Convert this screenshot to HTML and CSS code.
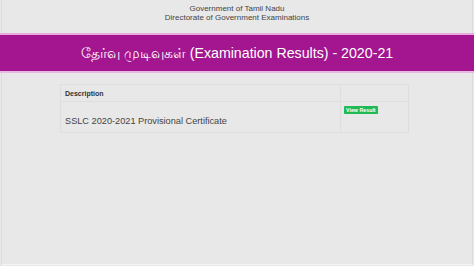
FILE: index.html
```html
<!DOCTYPE html>
<html>
<head>
<meta charset="utf-8">
<link rel="stylesheet" href="styles.css">
</head>
<body>
<div class="page">
  <header class="top">
    <div>Government of Tamil Nadu</div>
    <div>Directorate of Government Examinations</div>
  </header>
  <div class="banner">தேர்வு முடிவுகள் (Examination Results) - 2020-21</div>
  <main class="content">
    <table class="results">
      <thead>
        <tr><th class="desc">Description</th><th class="act"></th></tr>
      </thead>
      <tbody>
        <tr><td class="desc">SSLC 2020-2021 Provisional Certificate</td><td class="act"><span class="btn">View Result</span></td></tr>
      </tbody>
    </table>
  </main>
</div>
</body>
</html>
```

FILE: styles.css
```css
html, body {
  margin: 0;
  padding: 0;
  background: #e8e8e8;
}
body {
  font-family: "Liberation Sans", Arial, sans-serif;
  color: #333;
  width: 474px;
  height: 266px;
  overflow: hidden;
}
.page {
  height: 264px;
  margin: 0 1px;
  border-left: 1px solid #dcdcdc;
  border-right: 1px solid #dcdcdc;
  border-bottom: 1px solid #f4f4f4;
}
.top {
  text-align: center;
  font-size: 8px;
  line-height: 8.5px;
  color: #444;
  padding-top: 5px;
  height: 33px;
  box-sizing: border-box;
}
.banner {
  margin: 0 -2px;
  background: #a3168f;
  border-top: 2px solid #e8a9dd;
  border-bottom: 2px solid #e8b9e0;
  color: #fff;
  text-align: center;
  font-size: 14.2px;
  height: 36px;
  line-height: 36px;
}
.content {
  padding: 11px 0 0 58px;
}
.results {
  border-collapse: collapse;
  width: 349px;
}
.results th, .results td {
  border: 1px solid #dedede;
  text-align: left;
  vertical-align: top;
}
.results th {
  font-size: 7px;
  font-weight: bold;
  color: #333;
  height: 17px;
  padding: 5px 4px 0;
  box-sizing: border-box;
}
.results td {
  height: 31px;
  box-sizing: border-box;
}
.results td.desc {
  font-size: 9.2px;
  color: #444;
  padding: 14px 4px 0;
}
.results .act {
  width: 68px;
}
.results td.act {
  padding: 4px 3px 0;
  font-size: 0;
  line-height: 0;
}
.btn {
  display: inline-block;
  background: #20b956;
  color: #fff;
  font-size: 5.3px;
  font-weight: bold;
  line-height: 8px;
  padding: 0 2px;
  border-radius: 1px;
}
```
